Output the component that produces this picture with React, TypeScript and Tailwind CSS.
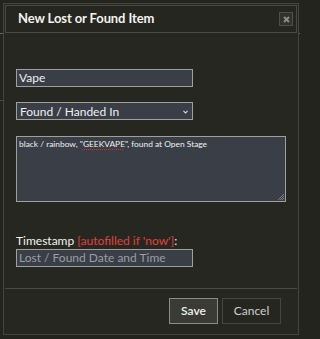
const font = { fontFamily: '"Lato", "Open Sans", sans-serif' };

export default function App() {
  return (
    <div className="relative h-[339px] w-full min-w-[300px] overflow-hidden bg-[#24241f]" style={font}>
      {/* page lines behind the dialog */}
      <div className="absolute left-0 top-[33px] h-px w-[4px] bg-[#6a6a64]" />
      <div className="absolute left-0 top-[100px] h-px w-[4px] bg-[#4a4a44]" />
      <div className="absolute left-[296px] top-[33px] h-px w-[4px] bg-[#6a6a64]" />

      <div className="absolute left-[3px] top-[3px] flex h-[332px] w-[296px] flex-col border border-[#45453f] bg-[#272722] p-[1px]">
        <div className="flex h-[28px] items-center justify-between border border-[#4a4a44] bg-[#262621] pl-[12px] pr-[3px]">
          <span className="text-[13px] font-bold tracking-[-0.1px] text-[#f2f2ee]">New Lost or Found Item</span>
          <button className="flex h-[14px] w-[14px] items-center justify-center border border-[#4f4f4a] bg-[#32322d]">
            <svg width="7" height="7" viewBox="0 0 7 7">
              <path d="M1 1 L6 6 M6 1 L1 6" stroke="#8e8e8a" strokeWidth="1.8" />
            </svg>
          </button>
        </div>

        <div className="flex flex-1 flex-col px-[11px] pt-[36px]">
          <input
            defaultValue="Vape"
            className="h-[18px] w-[177px] border border-[#a0a09a] bg-[#393e47] px-[2px] text-[12px] text-[#f0f0f0] outline-none"
          />
          <div className="relative mt-[15px] h-[18px] w-[177px] border border-[#a0a09a] bg-[#393e47]">
            <span className="absolute left-[3px] top-[0px] text-[12px] leading-[17px] text-[#f0f0f0]">Found / Handed In</span>
            <svg className="absolute right-[4px] top-[7px]" width="5" height="4" viewBox="0 0 5 4">
              <path d="M0.5 0.8 L2.5 3 L4.5 0.8" fill="none" stroke="#e0e0e0" strokeWidth="1.1" />
            </svg>
          </div>
          <div className="relative mt-[16px] h-[66px] w-[270px] border border-[#a0a09a] bg-[#393e47] px-[2px] py-[2px] text-[8.4px] leading-[11px] text-[#f0f0f0]">
            black / rainbow, "
            <span className="underline decoration-[#d03030] decoration-dotted underline-offset-[2px]">GEEKVAPE</span>
            ", found at Open Stage
            <svg className="absolute bottom-[1px] right-[1px]" width="6" height="6" viewBox="0 0 6 6">
              <path d="M6 0 L0 6 M6 2 L2 6 M6 4 L4 6" stroke="#8a8e96" strokeWidth="0.8" />
            </svg>
          </div>

          <div className="mt-[31px] text-[12px] leading-[15px] text-[#f2f2ee]">
            Timestamp <span className="text-[#e0403a]">[autofilled if 'now']</span>:
          </div>
          <input
            placeholder="Lost / Found Date and Time"
            className="mt-[1px] h-[18px] w-[177px] border border-[#a0a09a] bg-[#393e47] px-[2px] text-[12px] text-[#f0f0f0] outline-none placeholder:text-[#9a9ea6]"
          />
        </div>

        <div className="mt-auto flex h-[45px] items-start justify-end gap-[4px] border-t border-[#4a4a44] pr-[16px] pt-[9px]">
          <button className="h-[26px] w-[49px] border border-[#8c8c86] bg-[#3b3b35] text-[12px] font-semibold text-[#f2f2ee]">
            Save
          </button>
          <button className="h-[26px] w-[59px] border border-[#47473f] bg-[#262621] text-[12px] text-[#cfcfca]">
            Cancel
          </button>
        </div>
      </div>
    </div>
  );
}
